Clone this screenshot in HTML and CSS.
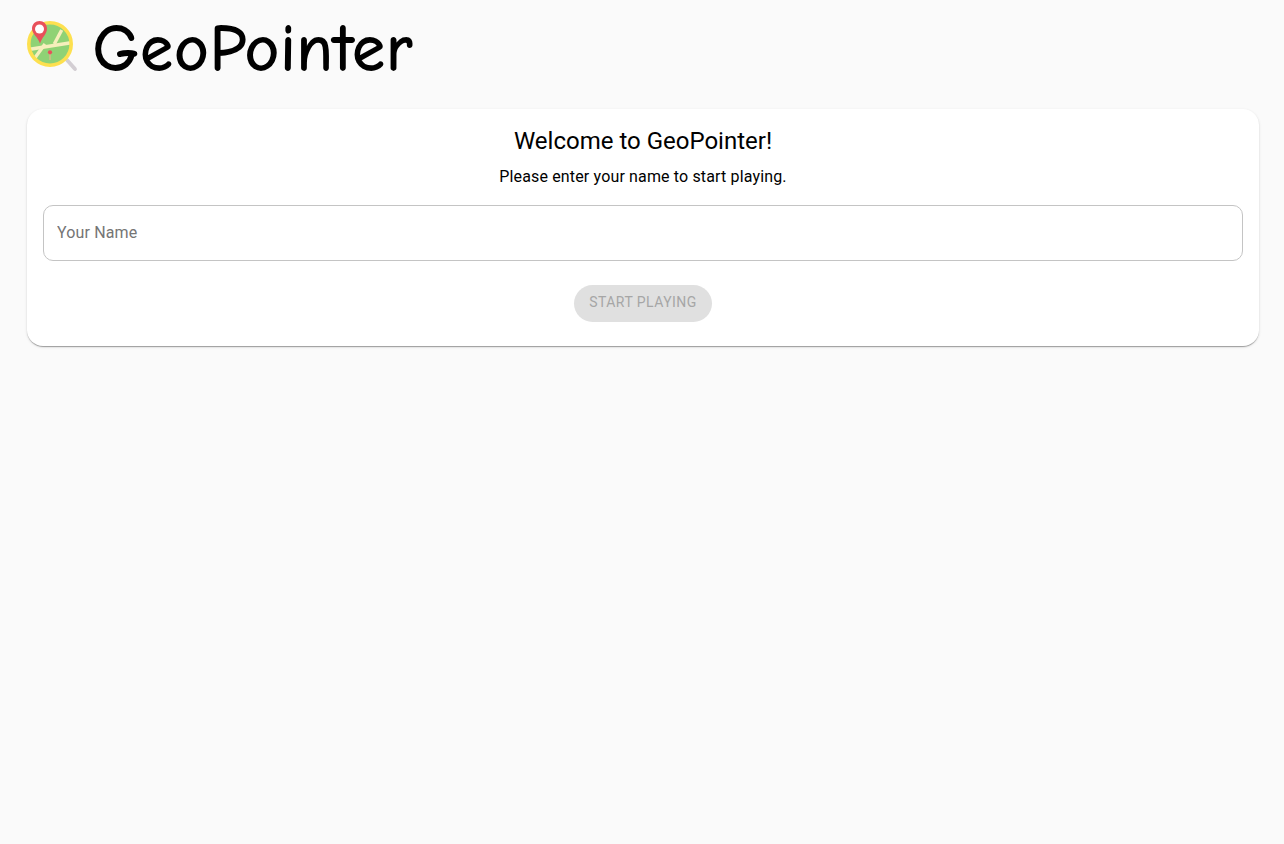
FILE: index.html
```html
<!DOCTYPE html>
<html lang="en">
<head>
<meta charset="utf-8">
<title>GeoPointer</title>
<link rel="stylesheet" href="styles.css">
</head>
<body>
<main class="page">
  <header class="brand">
    <svg class="logo" viewBox="0 0 52 52" width="52" height="52" aria-hidden="true">
      <path d="M40 40 L48 49" stroke="#d3ced3" stroke-width="3.8" stroke-linecap="round"/>
      <circle cx="23" cy="24" r="21" fill="#8fd275"/>
      <path d="M3 29.3 L44 22.7" stroke="#f6efbc" stroke-width="3.4"/>
      <path d="M6.3 40 L18 24" stroke="#f6efbc" stroke-width="3.4"/>
      <path d="M27.3 24 L34.7 10" stroke="#f6efbc" stroke-width="3.4"/>
      <circle cx="23" cy="24" r="21.2" fill="none" stroke="#fde04f" stroke-width="3.6"/>
      <path d="M23 33 V40" stroke="#f2b08f" stroke-width="1"/>
      <circle cx="23" cy="32.3" r="2.1" fill="#e8505a"/>
      <path d="M13 23.5 C11 17 5 14 5 8.5 C5 4 8.5 1 12.5 1 C16.5 1 20 4 20 8.5 C20 14 15 17 13 23.5Z" fill="#e8505a"/>
      <circle cx="12.5" cy="9" r="4.5" fill="#fff"/>
    </svg>
    <h1 class="title">GeoPointer</h1>
  </header>
  <section class="card">
    <h2 class="heading">Welcome to GeoPointer!</h2>
    <p class="lead">Please enter your name to start playing.</p>
    <input class="name-input" type="text" placeholder="Your Name">
    <button class="start" type="button" disabled>START PLAYING</button>
  </section>
</main>
</body>
</html>
```
FILE: styles.css
```css
* { box-sizing: border-box; }
html, body { margin: 0; height: 100%; }
body { background: #fafafa; font-family: Roboto, sans-serif; color: #000; }
.page { padding: 19px 25px 0 27px; }
.brand { display: flex; align-items: flex-start; gap: 14px; height: 60px; margin-bottom: 30px; }
.logo { flex: none; margin-top: 1px; }
.title { margin: 0; font-family: "Comic Sans MS", "Comic Neue", cursive; font-size: 64px; font-weight: 400; line-height: 60px; letter-spacing: 1.8px; -webkit-text-stroke: 1.8px #000; }
.card {
  display: flex; flex-direction: column; align-items: center;
  height: 237px; padding: 16px;
  background: #fff; border-radius: 16px;
  box-shadow: 0 2px 1px -1px rgba(0,0,0,.2), 0 1px 1px 0 rgba(0,0,0,.14), 0 1px 3px 0 rgba(0,0,0,.12);
}
.heading { margin: 0; font-size: 24px; font-weight: 400; line-height: 32px; }
.lead { margin: 8px 0 0; font-size: 16px; line-height: 24px; letter-spacing: .15px; }
.name-input {
  width: 100%; height: 56px; margin-top: 16px; padding: 0 13px 2px;
  font: 400 16px Roboto, sans-serif; letter-spacing: .15px; color: #000;
  background: #fff; border: 1px solid #c4c4c4; border-radius: 10px; outline: none;
}
.name-input::placeholder { color: #757575; opacity: 1; }
.start {
  width: 138px; height: 37px; margin-top: 24px; padding: 0 0 4px;
  font: 400 14px Roboto, sans-serif; letter-spacing: .45px; color: #a6a6a6;
  background: #e0e0e0; border: 0; border-radius: 19px;
}
```
